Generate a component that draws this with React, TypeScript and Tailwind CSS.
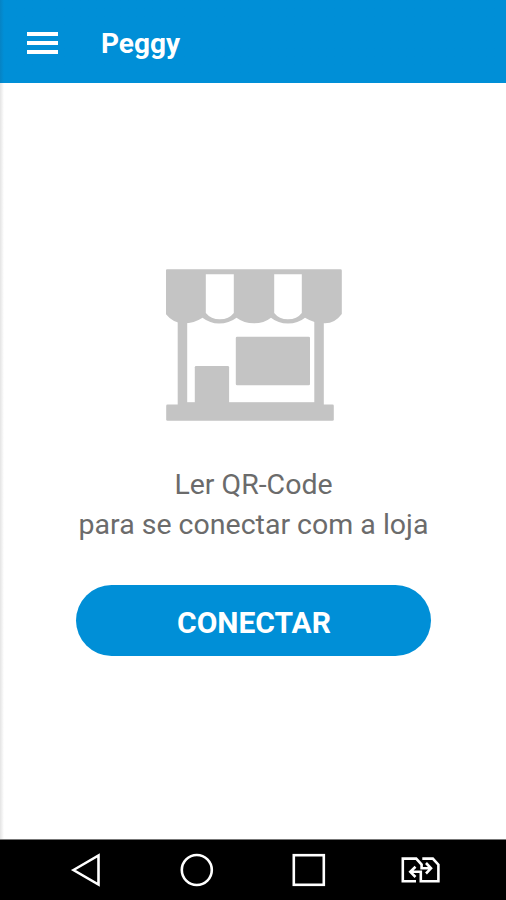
import React, { useState } from 'react';

function StoreIcon() {
    return (
        <svg className="w-[176px] h-[152px]" viewBox="166 269 176 152" fill="#c4c4c4">
            {/* awning */}
            <path
                fillRule="evenodd"
                d="M167 269.2H340.5Q341.8 269.2 341.8 270.5V314Q335 323.3 325 323.3Q314 323.3 305 317.7Q298 323.5 288 323.5Q278 323.5 271 317.7Q264 323.3 254 323.3Q244 323.3 236.5 317.7Q229 323.5 219 323.5Q210 323.5 202.5 317.7Q194 323.3 184 323.3Q173 323.3 165.8 314V270.5Q165.8 269.2 167 269.2Z
                M205.8 274.3V313Q211 319.3 219.8 319.3Q229 319.3 233.8 313V274.3Z
                M274.2 274.3V313Q279 319.3 288 319.3Q297 319.3 301.8 313V274.3Z"
            />
            {/* posts */}
            <rect x="177.7" y="320" width="9.5" height="88" />
            <rect x="314.3" y="320" width="9.5" height="88" />
            {/* counter and sign */}
            <rect x="194.8" y="366" width="34.3" height="42" rx="1.3" />
            <rect x="235.8" y="336.8" width="74.2" height="48.5" rx="1.3" />
            {/* floor */}
            <rect x="186" y="402.2" width="130" height="10" />
            <rect x="166.2" y="404.6" width="167.6" height="16.2" rx="1.3" />
        </svg>
    );
}

function NavBar() {
    return (
        <nav className="h-[61px] shrink-0 bg-black border-t border-[#777777]">
            <svg className="block w-full h-[60px]" viewBox="0 840 506 60" fill="none" stroke="#ffffff" strokeWidth="2.6">
                <path d="M73.5 870L98.5 855.5V884.5Z" />
                <circle cx="196.8" cy="870" r="15" />
                <rect x="293.8" y="855.2" width="30" height="29.6" />
                <path d="M416 881.2H402.8V858.6H416.2L421.6 864.5V868.3H430M426 863L431 868.3L426 873.5" />
                <path d="M422.3 858.6H432.8L438.4 864.7V881.2H420.8V871.8H411M415.5 866.8L410.3 871.8L415.5 877" />
            </svg>
        </nav>
    );
}

export default function App() {
    const [connecting, setConnecting] = useState(false);

    return (
        <div className="w-full h-screen flex flex-col bg-white overflow-hidden font-[Roboto,sans-serif]">
            <header className="h-[83px] shrink-0 bg-linear-to-r from-[#0683c4] to-[#008fd7] to-[4px] flex items-center">
                <button className="ml-[27px] mt-[3px] flex flex-col gap-[4.7px]" aria-label="Menu">
                    <span className="w-[31px] h-[4px] bg-white" />
                    <span className="w-[31px] h-[4px] bg-white" />
                    <span className="w-[31px] h-[4px] bg-white" />
                </button>
                <h1 className="ml-[43px] mt-[5px] text-[28px] leading-none font-bold text-white">Peggy</h1>
            </header>

            <main className="flex-1 flex flex-col items-center bg-linear-to-r from-[#e4e4e4] to-white to-[4px]">
                <div className="mt-[186px] pl-[2px]">
                    <StoreIcon />
                </div>
                <p className="mt-[44px] pl-px text-center text-[28.5px] leading-[40px] text-[#6b6b6b]">
                    Ler QR-Code
                    <br />
                    para se conectar com a loja
                </p>
                <button
                    onClick={() => setConnecting(true)}
                    disabled={connecting}
                    className="mt-[40px] w-[355px] h-[71px] pt-1 pl-[2px] rounded-full bg-[#008fd7] text-[30px] leading-none font-bold text-white"
                >
                    CONECTAR
                </button>
            </main>

            <NavBar />
        </div>
    );
}
